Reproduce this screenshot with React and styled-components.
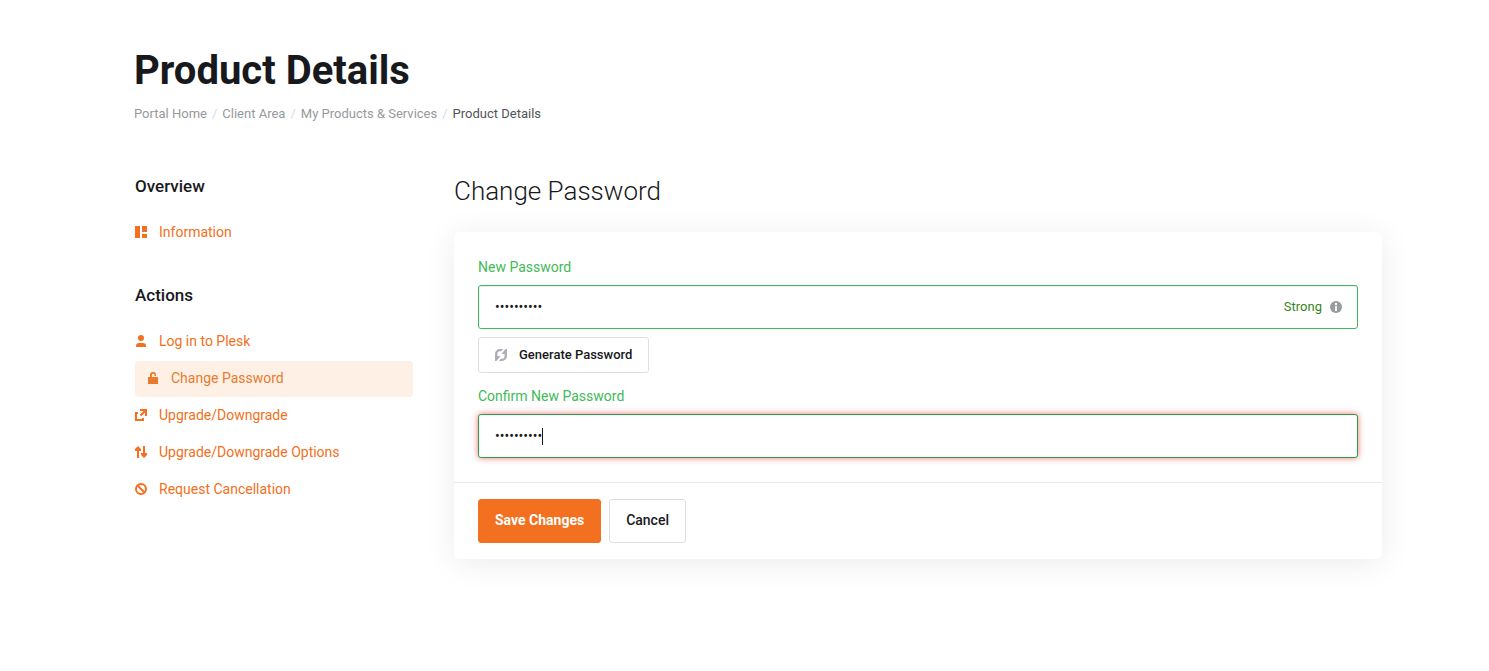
import React, { useState } from 'react';
import styled, { createGlobalStyle, css } from 'styled-components';

const actions = [
  { label: 'Log in to Plesk', icon: UserIcon },
  { label: 'Change Password', icon: LockIcon, active: true },
  { label: 'Upgrade/Downgrade', icon: ExternalIcon },
  { label: 'Upgrade/Downgrade Options', icon: ArrowsIcon },
  { label: 'Request Cancellation', icon: BanIcon },
];

export default function App() {
  const [password, setPassword] = useState('k7!Rw2#pQz');
  const [confirm, setConfirm] = useState('k7!Rw2#pQz');

  return (
    <Page>
      <GlobalStyle />
      <header>
        <Title>Product Details</Title>
        <Breadcrumb aria-label="Breadcrumb">
          <Crumb href="#">Portal Home</Crumb>
          <Slash>/</Slash>
          <Crumb href="#">Client Area</Crumb>
          <Slash>/</Slash>
          <Crumb href="#">My Products &amp; Services</Crumb>
          <Slash>/</Slash>
          <Current>Product Details</Current>
        </Breadcrumb>
      </header>
      <Columns>
        <Sidebar>
          <NavTitle>Overview</NavTitle>
          <Nav>
            <NavLink href="#">
              <PanelsIcon />
              Information
            </NavLink>
          </Nav>
          <NavTitle>Actions</NavTitle>
          <Nav>
            {actions.map(({ label, icon: Icon, active }) => (
              <NavLink key={label} href="#" $active={active}>
                <Icon />
                {label}
              </NavLink>
            ))}
          </Nav>
        </Sidebar>
        <main>
          <SectionTitle>Change Password</SectionTitle>
          <Card onSubmit={e => e.preventDefault()}>
            <CardBody>
              <Label htmlFor="new-password">New Password</Label>
              <Field>
                <Input
                  id="new-password"
                  type="password"
                  value={password}
                  onChange={e => setPassword(e.target.value)}
                />
                <Strength>
                  Strong
                  <InfoIcon />
                </Strength>
              </Field>
              <GenerateButton type="button">
                <RefreshIcon />
                Generate Password
              </GenerateButton>
              <Label htmlFor="confirm-password">Confirm New Password</Label>
              <Field>
                <Input
                  id="confirm-password"
                  type="password"
                  value={confirm}
                  onChange={e => setConfirm(e.target.value)}
                  autoFocus
                />
                <Caret />
              </Field>
            </CardBody>
            <CardFooter>
              <Button type="submit" $primary>
                Save Changes
              </Button>
              <Button type="button">Cancel</Button>
            </CardFooter>
          </Card>
        </main>
      </Columns>
    </Page>
  );
}

function PanelsIcon() {
  return (
    <Icon viewBox="0 0 12 12">
      <path d="M0 0h5v12H0zM7 0h5v6H7zM7 8h5v4H7z" />
    </Icon>
  );
}

function UserIcon() {
  return (
    <Icon viewBox="0 0 12 12">
      <circle cx="6" cy="3" r="3" />
      <path d="M1 12v-1a3 3 0 0 1 3-3h4a3 3 0 0 1 3 3v1z" />
    </Icon>
  );
}

function LockIcon() {
  return (
    <Icon viewBox="0 0 12 12">
      <path d="M1 5h2V3a3 3 0 0 1 6-.3V4H7.500V3a1.300 1.300 0 0 0-2.600 0v2H11v7H1z" />
    </Icon>
  );
}

function ExternalIcon() {
  return (
    <Icon viewBox="0 0 12 12">
      <path d="M0 3h3v2H2v5h5V9h2v3H0z" />
      <path d="M5 0h7v7h-2V3.500L6.200 7.300 4.700 5.800 8.500 2H5z" />
    </Icon>
  );
}

function ArrowsIcon() {
  return (
    <Icon viewBox="0 0 12 12">
      <path d="M3 0l3 3v2H4v7H2V5H0V3zM8 0h2v7h2v2l-3 3-3-3V7h2z" />
    </Icon>
  );
}

function BanIcon() {
  return (
    <Icon viewBox="0 0 12 12" fill="none" stroke="currentColor" strokeWidth="2">
      <circle cx="6" cy="6" r="5" />
      <path d="M2.500 2.500l7 7" />
    </Icon>
  );
}

function RefreshIcon() {
  return (
    <Icon viewBox="0 0 12 12">
      <path d="M0 9V5a5 5 0 0 1 5-5h3L6.300 2.300H5A2.500 2.500 0 0 0 2.500 5v1.500z" />
      <path d="M6.500 5L10.500 0H12v5z" />
      <path d="M12 3v4a5 5 0 0 1-5 5H4l1.700-2.300H7A2.500 2.500 0 0 0 9.500 7V5.500z" />
      <path d="M5.500 7L1.500 12H0V7z" />
    </Icon>
  );
}

function InfoIcon() {
  return (
    <Icon viewBox="0 0 12 12">
      <circle cx="6" cy="6" r="6" />
      <path fill="#fff" d="M5 2h2v2H5zM5 5h2v5H5z" />
    </Icon>
  );
}

const GlobalStyle = createGlobalStyle`
  *, *::before, *::after {
    box-sizing: border-box;
  }

  body {
    margin: 0;
    background: #fff;
    color: #17191c;
    font-family: Roboto, sans-serif;
    font-size: 14px;
    line-height: 21px;
  }

  button, input {
    font-family: inherit;
  }
`;

const Page = styled.div`
  padding: 47px 107px 64px 134px;
`;

const Title = styled.h1`
  margin: 0 0 7px;
  font-size: 40px;
  line-height: 48px;
  font-weight: 700;
`;

const Breadcrumb = styled.nav`
  display: flex;
  flex-wrap: wrap;
  gap: 5px;
  font-size: 13px;
  line-height: 24px;
`;

const Crumb = styled.a`
  color: #96999c;
  text-decoration: none;
`;

const Slash = styled.span`
  color: #d9dadc;
`;

const Current = styled.span`
  color: #505459;
`;

const Columns = styled.div`
  display: grid;
  grid-template-columns: 279px minmax(0, 1fr);
  gap: 41px;
  margin-top: 48px;
`;

const Sidebar = styled.aside`
  padding-left: 1px;
`;

const NavTitle = styled.h2`
  margin: 0 0 17px;
  font-size: 17px;
  line-height: 24px;
  font-weight: 500;
`;

const Nav = styled.nav`
  display: flex;
  flex-direction: column;
  gap: 1px;
  margin-bottom: 32px;
`;

const NavLink = styled.a`
  display: flex;
  align-items: center;
  gap: 12px;
  height: 36px;
  padding: 0 0 2px;
  border-radius: 4px;
  color: #f37021;
  text-decoration: none;

  ${({ $active }) =>
    $active &&
    css`
      padding: 0 12px 2px;
      background: #fef0e5;
      color: #e97b2e;
    `}
`;

const Icon = styled.svg.attrs(({ fill }) => ({
  fill: fill || 'currentColor',
  'aria-hidden': true,
}))`
  flex: none;
  width: 12px;
  height: 12px;
`;

const SectionTitle = styled.h2`
  margin: 0 0 24px;
  font-size: 26px;
  line-height: 34px;
  font-weight: 300;
`;

const Card = styled.form`
  border-radius: 6px;
  background: #fff;
  box-shadow: 0 4px 32px rgba(0, 0, 0, 0.08);
`;

const CardBody = styled.div`
  padding: 24px;
`;

const Label = styled.label`
  display: block;
  margin-bottom: 6px;
  color: #3fba58;
  line-height: 23px;
`;

const Field = styled.div`
  position: relative;
`;

const Input = styled.input`
  display: block;
  width: 100%;
  height: 44px;
  padding: 0 16px;
  border: 1px solid #3fba58;
  border-radius: 3px;
  background: #fff;
  box-shadow: inset 0 1px 1px rgba(0, 0, 0, 0.08);
  color: #17191c;
  font-size: 14px;
  caret-color: transparent;

  &:focus {
    outline: none;
    border-color: #2f9e44;
    box-shadow: 0 0 6px rgba(222, 60, 60, 0.7);
  }
`;

const Caret = styled.span`
  position: absolute;
  top: 14px;
  left: 64px;
  width: 1px;
  height: 17px;
  background: #17191c;
`;

const Strength = styled.span`
  position: absolute;
  top: 0;
  right: 16px;
  display: flex;
  align-items: center;
  gap: 8px;
  height: 44px;
  padding-bottom: 1px;
  color: #37861a;
  font-size: 13px;

  svg {
    color: #999ba3;
  }
`;

const Button = styled.button`
  height: 44px;
  padding: 0 16px 2px;
  border: 1px solid ${({ $primary }) => ($primary ? '#f37021' : '#dddfe1')};
  border-radius: 3px;
  background: ${({ $primary }) => ($primary ? '#f37021' : '#fff')};
  color: ${({ $primary }) => ($primary ? '#fff' : '#17191c')};
  font-size: 14px;
  font-weight: ${({ $primary }) => ($primary ? 700 : 500)};
  cursor: pointer;
`;

const GenerateButton = styled(Button)`
  display: flex;
  align-items: center;
  gap: 12px;
  height: 36px;
  margin: 8px 0 12px;
  padding-bottom: 1px;
  font-size: 13px;

  svg {
    color: #acafb8;
  }
`;

const CardFooter = styled.div`
  display: flex;
  gap: 8px;
  padding: 16px 24px;
  border-top: 1px solid #e7e8e9;
`;
